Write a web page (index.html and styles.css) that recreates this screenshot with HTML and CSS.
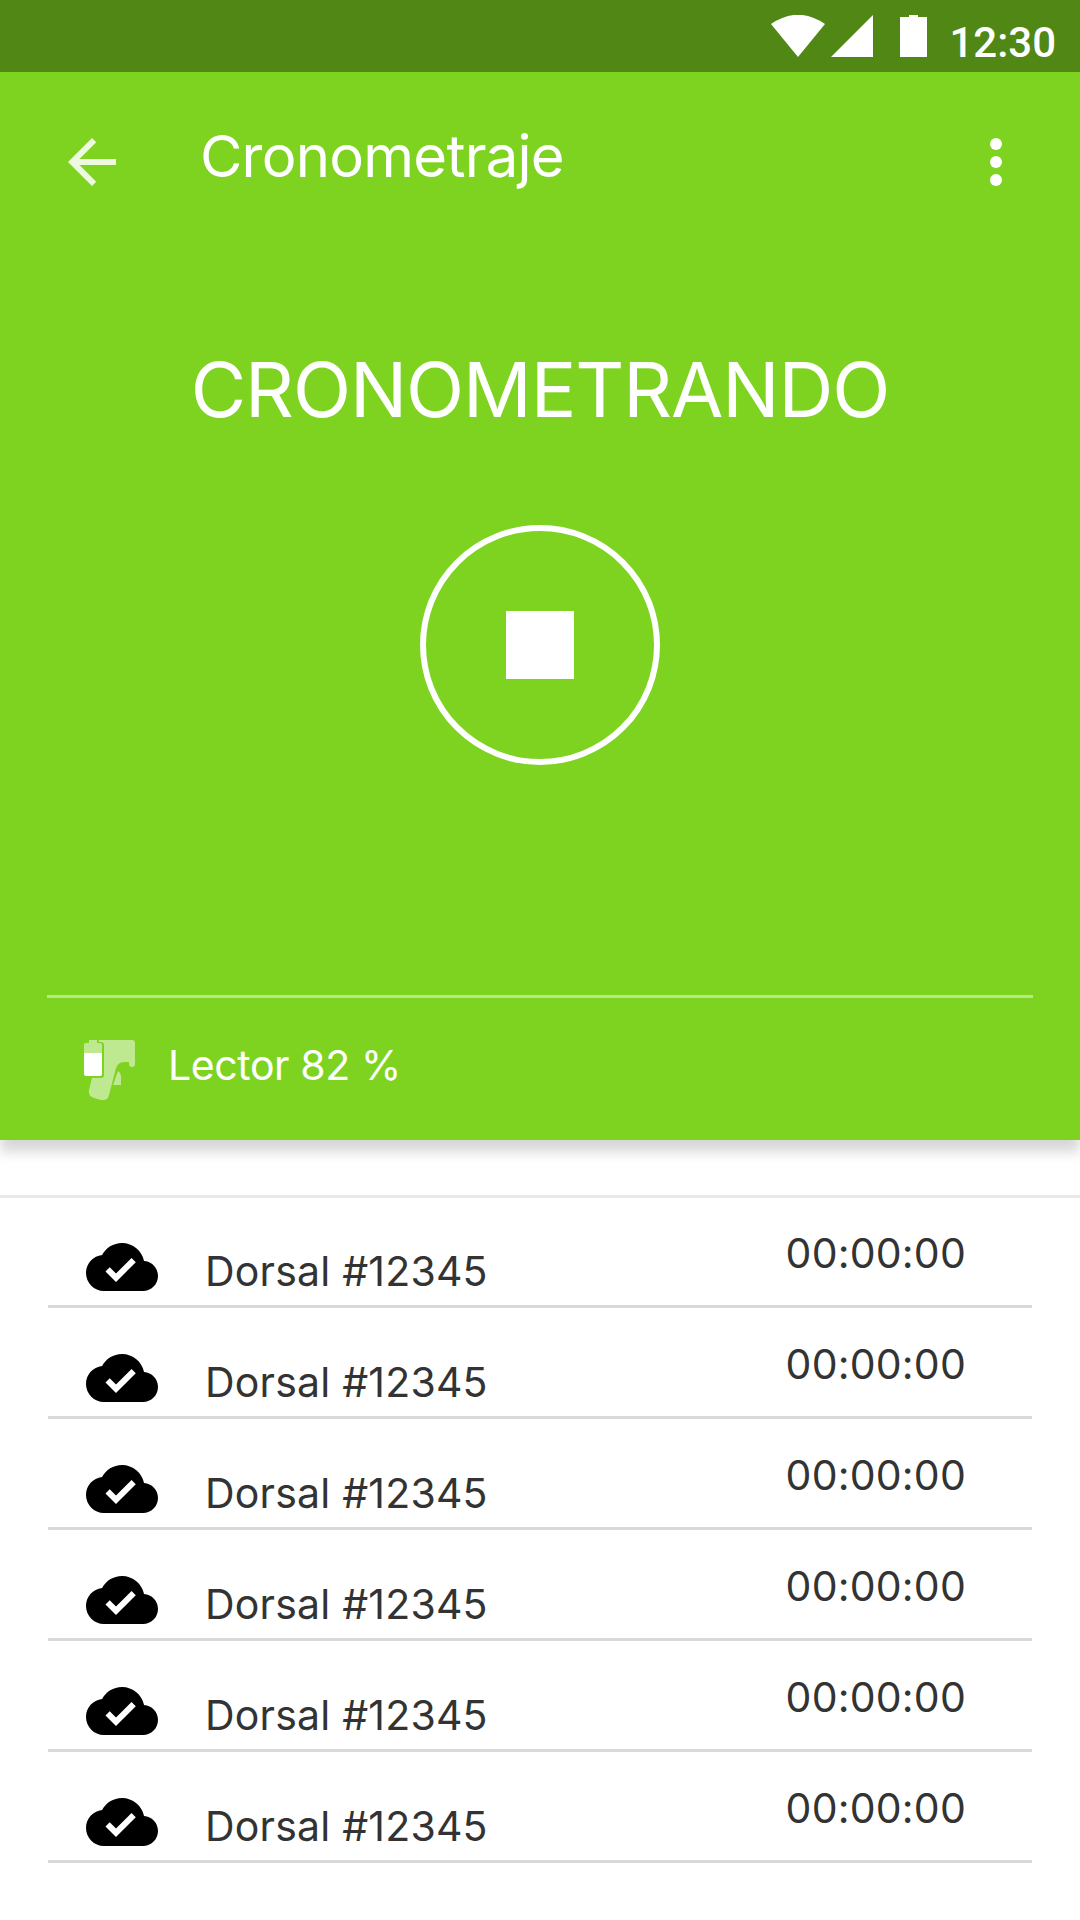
FILE: index.html
```html
<!DOCTYPE html>
<html lang="es">
<head>
    <meta charset="UTF-8">
    <meta name="viewport" content="width=device-width, initial-scale=1.0">
    <title>Cronometraje</title>
    <link rel="stylesheet" href="styles.css">
</head>
<body>
    <div class="status-bar">
        <svg class="status-icons" width="156" height="42" viewBox="0 0 156 42">
            <path d="M0 9Q27 -9.500 54 9L27 42z"/>
            <path d="M60 42L102 0V42z"/>
            <path d="M129 2h9V0h9v2h9v40h-27z"/>
        </svg>
        <span class="clock">12:30</span>
    </div>

    <header class="header">
        <div class="toolbar">
            <svg class="icon back" viewBox="0 0 24 24">
                <path d="M20 11H7.83l5.59-5.59L12 4l-8 8 8 8 1.41-1.41L7.83 13H20v-2z"/>
            </svg>
            <h1 class="title">Cronometraje</h1>
            <svg class="icon" viewBox="0 0 24 24">
                <circle cx="12" cy="6" r="2"/>
                <circle cx="12" cy="12" r="2"/>
                <circle cx="12" cy="18" r="2"/>
            </svg>
        </div>

        <div class="timer">
            <p class="state">CRONOMETRANDO</p>
            <button class="stop-btn" aria-label="Detener"><span class="stop-square"></span></button>
        </div>

        <div class="reader">
            <svg class="reader-icon" width="51" height="60" viewBox="0 0 51 60">
                <g fill-opacity="0.5">
                    <path d="M0 13V5q0-2 2-2h3V0h8v3h3q2 0 2 2v8z"/>
                    <path d="M14.500 0H48q3 0 3 3V24q0 3-3 3t-3-3V22H40q-6 0-8 6L25 55q-1.500 6-8 5L10 58q-6-2-5-8L8 38h9q3 0 3-3V5q0-3-3-3h-2z"/>
                    <path d="M29 45L34 31q3 2 3 5v9z"/>
                </g>
                <path d="M0 13H18V34q0 2-2 2H2q-2 0-2-2z"/>
            </svg>
            <span class="reader-text">Lector 82 %</span>
        </div>
    </header>

    <ul class="list" id="list"></ul>

    <script>
        const list = document.getElementById('list');
        const dorsales = Array(6).fill({ dorsal: '12345', tiempo: '00:00:00' });

        dorsales.forEach(item => {
            const row = document.createElement('li');
            row.className = 'row';
            row.innerHTML = `
                <svg class="cloud" viewBox="0 0 24 24">
                    <path d="M19.35 10.040C18.67 6.590 15.640 4 12 4 9.110 4 6.600 5.640 5.350 8.040 2.340 8.360 0 10.910 0 14c0 3.310 2.690 6 6 6h13c2.760 0 5-2.240 5-5 0-2.640-2.050-4.780-4.650-4.960zM10 17l-3.500-3.500 1.410-1.410L10 14.170 15.180 9l1.410 1.410L10 17z"/>
                </svg>
                <span class="dorsal">Dorsal #${item.dorsal}</span>
                <span class="time">${item.tiempo}</span>`;
            list.appendChild(row);
        });
    </script>
</body>
</html>
```
FILE: styles.css
```css
* {
    margin: 0;
    padding: 0;
    box-sizing: border-box;
}

body {
    font-family: Inter, "Liberation Sans", sans-serif;
    width: 1080px;
    height: 1920px;
    background-color: #fff;
    overflow: hidden;
}

.status-bar {
    display: flex;
    justify-content: flex-end;
    height: 72px;
    padding: 15px 24px 0 0;
    background-color: #518815;
}

.status-icons {
    fill: #fff;
}

.clock {
    margin-left: 22px;
    color: #fff;
    font-family: Roboto, sans-serif;
    font-size: 42px;
    font-weight: 500;
    line-height: 56px;
}

.header {
    display: flex;
    flex-direction: column;
    height: 1068px;
    background-color: #7ed321;
    color: #fff;
    box-shadow: 0 12px 12px rgba(0, 0, 0, 0.16);
}

.toolbar {
    display: flex;
    align-items: center;
    height: 180px;
    padding: 0 48px 0 56px;
}

.icon {
    width: 72px;
    height: 72px;
    fill: #fff;
}

.back {
    opacity: 0.87;
}

.title {
    flex: 1;
    margin-left: 72px;
    padding-bottom: 12px;
    font-size: 58px;
    font-weight: 400;
    letter-spacing: -0.75px;
    line-height: 70px;
}

.timer {
    display: flex;
    flex: 1;
    flex-direction: column;
    align-items: center;
    padding-top: 91px;
}

.state {
    font-size: 76px;
    letter-spacing: -1.1px;
    line-height: 92px;
}

.stop-btn {
    display: flex;
    align-items: center;
    justify-content: center;
    width: 240px;
    height: 240px;
    margin-top: 90px;
    border: 6px solid #fff;
    border-radius: 50%;
    background: none;
}

.stop-square {
    width: 68px;
    height: 68px;
    background-color: #fff;
}

.reader {
    display: flex;
    align-items: flex-start;
    height: 145px;
    margin: 0 47px;
    padding: 42px 37px 0;
    border-top: 3px solid rgba(255, 255, 255, 0.45);
}

.reader-icon {
    fill: #fff;
}

.reader-text {
    margin-left: 33px;
    font-size: 41px;
    letter-spacing: -0.4px;
    line-height: 50px;
}

.list {
    margin-top: 55px;
    border-top: 3px solid #e9e9e9;
    list-style: none;
}

.row {
    display: flex;
    align-items: flex-start;
    height: 111px;
    margin: 0 48px;
    padding: 34px 66px 0 38px;
    border-bottom: 3px solid #d8dada;
    color: #333;
    font-size: 41px;
    letter-spacing: 0.2px;
    line-height: 50px;
}

.row:first-child {
    height: 110px;
    padding-top: 33px;
}

.cloud {
    width: 72px;
    height: 72px;
    fill: #000;
}

.dorsal {
    flex: 1;
    margin: 15px 0 0 47px;
}

.time {
    margin-top: -3px;
}
```
